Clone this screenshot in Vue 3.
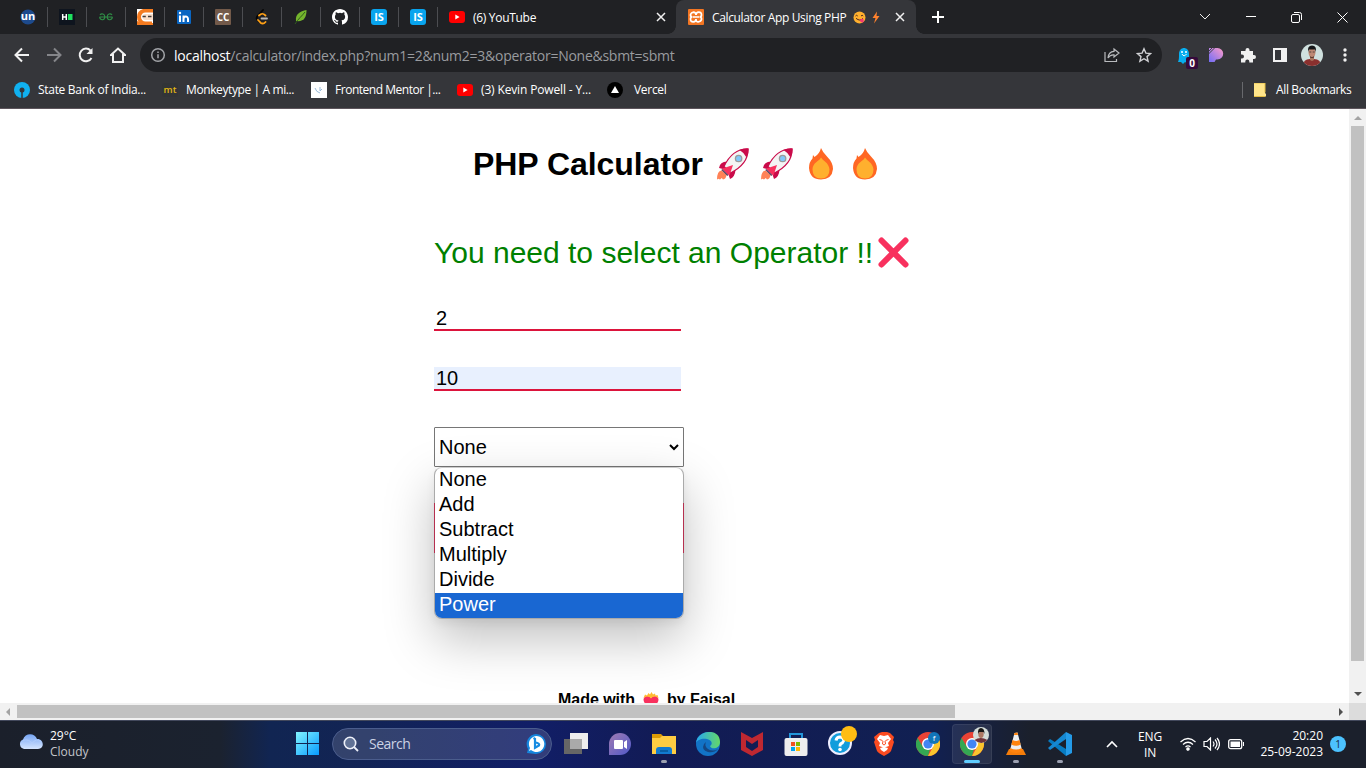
<script setup>
const options = ['None', 'Add', 'Subtract', 'Multiply', 'Divide', 'Power']
</script>

<template>
  <div class="screen">
    <header class="tabs">
      <div class="mini"><svg width="16" height="16" viewBox="0 0 16 16"><circle cx="8" cy="8" r="7.500" fill="#1d4a8c"/><text x="8" y="11" text-anchor="middle" font-size="11" font-weight="700" fill="#fff">un</text></svg></div>
      <div class="mini"><svg width="16" height="16" viewBox="0 0 16 16"><rect width="16" height="16" fill="#0e141e"/><path d="M3.700 5v6M7.300 5v6M3.700 8h3.500" stroke="#fff" stroke-width="1.500"/><rect x="9" y="5" width="4.500" height="6" fill="#1fe25f"/></svg></div>
      <div class="mini"><svg width="16" height="16" viewBox="0 0 16 16" fill="none" stroke="#2f8d46" stroke-width="1.200"><path d="M2 6C3.500 4 6.800 4.800 6.800 8c0 3.200-4.300 4-5.300.2M1.500 8h13M14 6c-1.500-2-4.800-1.200-4.800 2 0 3.200 4.300 4 5.300.2"/></svg></div>
      <div class="mini"><svg width="16" height="16" viewBox="0 0 16 16"><rect width="16" height="16" fill="#fff"/><path d="M16 0v3.500H8.500a4.500 4.500 0 0 0 0 9H15V15H6q-6-1-6-7t6-8z" fill="#f47b20"/><path d="M16 5H8.500a3 3 0 0 0 0 6H16z" fill="#f8ddc9"/><path d="M5.500 7.500h3.300M11 7.500h3.500" stroke="#423b39" stroke-width="1.300"/><path d="M0 12v4h16v-2H6z" fill="#f47b20"/></svg></div>
      <div class="mini"><svg width="14" height="14" viewBox="0 0 14 14"><rect width="14" height="14" rx="1" fill="#0a66c2"/><path d="M3 5.500V12M6.500 5.500V12M6.500 9c0-3.200 4.500-3.400 4.500 0v3" fill="none" stroke="#fff" stroke-width="2"/><circle cx="3" cy="3" r="1.200" fill="#fff"/></svg></div>
      <div class="mini"><svg width="16" height="16" viewBox="0 0 16 16"><rect width="16" height="16" rx="1" fill="#735a4a"/><text x="8" y="11.500" text-anchor="middle" font-size="10" font-weight="700" fill="#fff">CC</text></svg></div>
      <div class="mini"><svg width="16" height="16" viewBox="0 0 16 16" fill="none" stroke-width="1.800" stroke-linecap="round"><path d="M9 1 3 7.500M3.500 7.500C1.500 9.500 3 10.500 5 12.500" stroke="#050505"/><path d="M5 6.500C8 3.500 9.500 4.500 11.500 6.500M4 11l2.500 2.700c2 1.500 3.500 1 5-.7" stroke="#ffa116"/><path d="M7.500 9.500H13" stroke="#b9b9b9"/></svg></div>
      <div class="mini"><svg width="16" height="16" viewBox="0 0 16 16"><path d="M13.500 1C7 2.500 2 5 3 12c8 1 10.500-3.500 10.500-11z" fill="#74b42d"/><path d="M2 15C5 10 9 7 12 3" stroke="#315c1d" fill="none"/></svg></div>
      <div class="mini"><svg width="16" height="16" viewBox="0 0 16 16"><path fill="#fff" d="M8 0C3.580 0 0 3.580 0 8c0 3.540 2.290 6.530 5.470 7.590.4.070.55-.17.55-.38 0-.19-.01-.82-.01-1.490-2.010.37-2.530-.49-2.690-.94-.09-.23-.48-.94-.82-1.130-.28-.15-.68-.52-.01-.53.63-.01 1.080.58 1.230.82.72 1.210 1.870.87 2.330.66.07-.52.28-.87.51-1.070-1.780-.2-3.640-.89-3.640-3.950 0-.87.31-1.590.82-2.150-.08-.2-.36-1.020.08-2.120 0 0 .67-.21 2.200.82a7.600 7.600 0 0 1 4 0c1.530-1.040 2.200-.82 2.200-.82.44 1.100.16 1.920.08 2.120.51.56.82 1.270.82 2.150 0 3.070-1.870 3.750-3.650 3.950.29.25.54.73.54 1.480 0 1.070-.01 1.930-.01 2.200 0 .21.15.46.55.38A8 8 0 0 0 16 8c0-4.420-3.580-8-8-8z"/></svg></div>
      <div v-for="n in 2" :key="n" class="mini"><svg width="16" height="16" viewBox="0 0 16 16"><rect width="16" height="16" rx="3" fill="#08a4ee"/><text x="8" y="12" text-anchor="middle" font-size="11" font-weight="700" fill="#fff">IS</text></svg></div>
      <div class="tab">
        <svg width="16" height="16" viewBox="0 0 16 16"><rect y="2" width="16" height="12" rx="3" fill="#f00"/><path d="m6.300 5.500 4.300 2.500-4.300 2.500z" fill="#fff"/></svg>
        <span class="t-yt">(6) YouTube</span>
        <svg class="end" width="10" height="10" viewBox="0 0 10 10"><path d="m1 1 8 8M9 1 1 9" stroke="#f1f1f1" stroke-width="1.500"/></svg>
      </div>
      <div class="tab active">
        <svg width="16" height="16" viewBox="0 0 16 16"><rect width="16" height="16" rx="1" fill="#f37623"/><path d="M5.200 3.200Q8 3.200 8 6q0-2.800 2.800-2.800T13.500 6q0 2-2 2 2 0 2 2t-2.700 2.800T8 10q0 2.800-2.800 2.800T2.500 10q0-2 2-2-2 0-2-2t2.700-2.800zM5 8h6" fill="none" stroke="#fff" stroke-width="1.700"/></svg>
        <span class="t-calc">Calculator App Using PHP</span>
        <svg class="face" width="13" height="13" viewBox="0 0 13 13"><circle cx="6.500" cy="6.500" r="6" fill="#ffb02e"/><path d="M2.500 5q1.200-1.500 2.200 0M8 5q1.200-1.500 2.200 0M3 7.300q4 3.500 7 0" fill="none" stroke="#4b2820"/><path d="M6.500 8.800 10 7.500q1.700 3.500-.5 4-2 .3-3-2.700z" fill="#f13774"/></svg>
        <svg class="bolt" width="8" height="13" viewBox="0 0 8 13"><path d="M5 .5.5 7h3L2 12.500 7.500 5h-3z" fill="#ff822d"/></svg>
        <svg class="end" width="10" height="10" viewBox="0 0 10 10"><path d="m1 1 8 8M9 1 1 9" stroke="#f1f1f1" stroke-width="1.500"/></svg>
      </div>
      <svg class="plus" width="14" height="14" viewBox="0 0 14 14"><path d="M7 1v12M1 7h12" stroke="#fff" stroke-width="2"/></svg>
      <div class="window">
        <span><svg width="12" height="8" viewBox="0 0 12 8"><path d="m1 1 5 5 5-5" stroke="#eee" fill="none"/></svg></span>
        <span><svg width="10" height="2" viewBox="0 0 10 2"><path d="M0 .5h10" stroke="#fff"/></svg></span>
        <span><svg width="11" height="11" viewBox="0 0 11 11" fill="none" stroke="#fff"><rect x=".5" y="2.500" width="8" height="8" rx="1.500"/><path d="M3 .5h5.500a2 2 0 0 1 2 2V8"/></svg></span>
        <span><svg width="11" height="11" viewBox="0 0 11 11"><path d="m.5.5 10 10M10.500.5l-10 10" stroke="#fff"/></svg></span>
      </div>
    </header>

    <div class="toolbar">
      <div class="nav">
        <svg width="16" height="16" viewBox="0 0 16 16"><path d="M15 8H2M8 1.500 1.500 8 8 14.500" fill="none" stroke="#f1f1f1" stroke-width="2"/></svg>
        <svg width="16" height="16" viewBox="0 0 16 16"><path d="M1 8h13M8 1.500 14.500 8 8 14.500" fill="none" stroke="#85868a" stroke-width="2"/></svg>
        <svg width="16" height="16" viewBox="0 0 16 16"><path d="M13.500 11A6.300 6.300 0 1 1 12.600 3.600" fill="none" stroke="#f1f1f1" stroke-width="2"/><path d="M14.500 1v6h-6z" fill="#f1f1f1"/></svg>
        <svg width="16" height="16" viewBox="0 0 16 16"><path d="M1 8 8 1.500 15 8h-2v7H3V8z" fill="none" stroke="#f1f1f1" stroke-width="2"/></svg>
      </div>
      <div class="omnibox">
        <svg width="16" height="16" viewBox="0 0 16 16"><circle cx="8" cy="8" r="6.300" fill="none" stroke="#a2a4a8" stroke-width="1.500"/><path d="M8 7.200v4M8 4.500v1.500" stroke="#a2a4a8" stroke-width="1.500"/></svg>
        <span class="url"><b>localhost</b>/calculator/index.php?num1=2&amp;num2=3&amp;operator=None&amp;sbmt=sbmt</span>
        <svg class="end" width="16" height="16" viewBox="0 0 16 16"><path d="M1 5v9.500h11.500V12M10 2l5 4-5 4V7.800q-4-.3-6 3.200.5-6.500 6-6.700z" fill="none" stroke="#b9bbbe" stroke-width="1.200"/></svg>
        <svg class="star" width="16" height="16" viewBox="0 0 16 16"><path d="m8 1.800 1.900 4.300 4.700.4-3.600 3.100 1.100 4.600L8 11.700l-4.100 2.500L5 9.600 1.400 6.500l4.700-.4z" fill="none" stroke="#d0d1d4" stroke-width="1.400"/></svg>
      </div>
      <div class="extensions">
        <svg width="22" height="24" viewBox="0 0 22 24"><path d="M2 16c1-2 1-5 1-8 0-8 10-8 10 0v7l-2 2-2-1-2 2-2-2z" fill="#08aeef"/><path d="M6 8q2 3.500 4.500 0" fill="none" stroke="#fff"/><circle cx="6" cy="6" r="1" fill="#fff"/><circle cx="10" cy="6" r="1" fill="#fff"/><rect x="10" y="11" width="12" height="12" rx="2" fill="#350a3c"/><text x="16" y="20.500" text-anchor="middle" font-size="10" font-weight="700" fill="#fff">0</text></svg>
        <svg width="16" height="16" viewBox="0 0 16 16"><defs><linearGradient id="p" x1="1" y1="0" x2="0" y2="1"><stop stop-color="#ff9cc8"/><stop offset="1" stop-color="#706cf7"/></linearGradient></defs><path d="M1 1h8.500a5.700 5.700 0 0 1 0 11.400H8L6.500 15H1z" fill="url(#p)"/><path d="m0 5 5-5M0 7.500 7.500 0" stroke="#35363a" stroke-width=".9"/></svg>
        <svg width="16" height="16" viewBox="0 0 16 16"><path d="M1 4h4.500V3a2 2 0 0 1 4 0v1H13v4h1a2 2 0 0 1 0 4h-1v3.500H9.300v-1a2 2 0 0 0-4 0v1H1v-4h1a2 2 0 0 0 0-4H1z" fill="#f1f1f1"/></svg>
        <svg width="16" height="16" viewBox="0 0 16 16"><path fill-rule="evenodd" d="M1 1h14v14H1zM3 3v10h6V3z" fill="#f1f1f1"/></svg>
        <svg width="22" height="22" viewBox="0 0 22 22"><defs><clipPath id="av"><circle cx="11" cy="11" r="11"/></clipPath></defs><g clip-path="url(#av)"><path d="M0 0h22v22H0z" fill="#cfe0de"/><path d="M2 22q0-7 7-7h4q7 0 7 7z" fill="#8a302e"/><path d="M9 11h4v5l-2 1-2-1z" fill="#aa765f"/><ellipse cx="11" cy="8.500" rx="3.500" ry="4.800" fill="#bd8873"/><path d="M7.200 8Q6 1.500 11 1.500T14.800 8L14 5.500H8z" fill="#161719"/><path d="M8.500 11.500q2.500 3 5 0L12.500 14h-3z" fill="#5c3a30"/><path d="M8.300 8h2M11.700 8h2" stroke="#403532" stroke-width=".8"/></g></svg>
        <svg width="4" height="16" viewBox="0 0 4 16" fill="#f1f1f1"><circle cx="2" cy="3" r="1.700"/><circle cx="2" cy="8" r="1.700"/><circle cx="2" cy="13" r="1.700"/></svg>
      </div>
    </div>

    <nav class="bookmarks">
      <svg width="16" height="16" viewBox="0 0 16 16"><circle cx="8" cy="8" r="8" fill="#10b1f0"/><circle cx="8" cy="8" r="2.500" fill="#35363a"/><path d="M8 8v8" stroke="#35363a" stroke-width="1.500"/></svg><span class="b-sbi">State Bank of India...</span>
      <svg width="16" height="16" viewBox="0 0 16 16"><rect y="1" width="16" height="14" rx="3" fill="#323437"/><text x="8" y="11" text-anchor="middle" font-size="9.500" font-weight="600" fill="#e2b714">mt</text></svg><span class="b-mt">Monkeytype | A mi...</span>
      <svg width="16" height="16" viewBox="0 0 16 16"><path d="M0 0h16v16H0z" fill="#fff"/><path d="M4 6q1 4 5 5M9 5v4l2-2" stroke="#98b9d8" fill="none"/></svg><span class="b-fm">Frontend Mentor |...</span>
      <svg width="16" height="16" viewBox="0 0 16 16"><rect y="2" width="16" height="12" rx="3" fill="#f00"/><path d="m6.300 5.500 4.300 2.500-4.300 2.500z" fill="#fff"/></svg><span class="b-kp">(3) Kevin Powell - Y...</span>
      <svg width="16" height="16" viewBox="0 0 16 16"><circle cx="8" cy="8" r="8" fill="#000"/><path d="m8 4 4 7H4z" fill="#fff"/></svg><span class="b-ver">Vercel</span>
      <div class="all"><svg width="14" height="14" viewBox="0 0 14 14"><path d="M1 0h11v10l1 1v2.500H1z" fill="#ffe58a"/><path d="M1 0h11v9.500M1 13.500h11" fill="none" stroke="#e4bd42"/></svg><span class="b-all">All Bookmarks</span></div>
    </nav>

    <main class="viewport">
      <section class="page">
        <h1>PHP Calculator
          <svg v-for="n in 2" :key="'r' + n" class="rocket" width="32" height="32" viewBox="0 0 32 32"><path d="M0 31.500Q0 23 4.500 22.500L9.500 27q-.5 4-3.500 4.500l-1.200-1.600L3 31.500l-1.500-.7z" fill="#ff8257"/><path d="M10 13.500Q3 13.500 2 20l6 1.500zM18.500 22Q18 29 13 31l-2-6z" fill="#ca0b4a"/><path d="M31 1Q15.500.5 7 18.500l6.500 6.500Q31.500 16 31 1z" fill="#f4f4f4" stroke="#ca0b4a" stroke-width="1.200"/><path d="M31.600.4Q26.500 0 22.500 2q4.500 2.500 7 7.500Q31.800 5.500 31.600.4z" fill="#ca0b4a"/><path d="M5.500 20.500 16 17l-3.500 10.500z" fill="#f8315e"/><path d="m7 20-1.500 1 5.500 6 1.500-2z" fill="#f8315e"/><path d="m4.800 21.500 6 6" stroke="#61415f" stroke-width="1.600"/><circle cx="21.600" cy="10.500" r="3.200" fill="#82c7f8" stroke="#9b9b9b" stroke-width="1.300"/></svg>
          <svg v-for="n in 2" :key="'f' + n" class="fire" width="32" height="32" viewBox="0 0 32 32"><path d="M16 0q1.500 4 6 8.500Q28 14.500 28 21q-1 10.500-12 10.500T4 20q0-6 3.500-9.500L8 7l1.500 2Q14.500 6 16 0z" fill="#ff6723"/><path d="M16 9.500q1 1.500 4.500 4.500T24.500 21.500q0 9-8.500 9t-8.500-9q0-4.500 4-7.500T16 9.500z" fill="#ffb02e"/></svg>
        </h1>
        <p class="message">You need to select an Operator !!<svg width="31" height="31" viewBox="0 0 31 31"><path d="m3.500 3.500 24 24M27.500 3.500l-24 24" stroke="#f8315e" stroke-width="6" stroke-linecap="round"/></svg></p>
        <div class="field">2</div>
        <div class="field filled">10</div>
        <div class="select">None<svg width="10" height="7" viewBox="0 0 10 7"><path d="m1 1 4 4 4-4" fill="none" stroke="#000" stroke-width="2"/></svg>
          <ul class="menu"><li v-for="o in options" :key="o" :class="{ chosen: o === 'Power' }">{{ o }}</li></ul>
        </div>
        <div class="submit"></div>
        <footer>Made with <svg width="16" height="16" viewBox="0 0 16 16"><path d="M8 16Q.5 12 .5 7.500 1 4 4.500 4 7 4 8 6q1-2 3.500-2 3.500 0 4 3.500Q15.500 12 8 16z" fill="#f8315e"/><path d="M.5 6 2 2.500l2 1L5.500 1 7 2.500 8.500 0l1.500 2.500 2-1 .5 2 2-.5 1 3-3-1.500-3 .5L8 6.500 6.500 5l-3-.5z" fill="#ffba31"/></svg> by Faisal</footer>
      </section>
      <aside class="vbar"><svg width="17" height="17" viewBox="0 0 17 17"><path d="m5 11 4-4 4 4z" fill="#a3a3a3"/></svg><i></i><svg width="17" height="17" viewBox="0 0 17 17"><path d="m5 6 4 4 4-4z" fill="#505050"/></svg></aside>
    </main>
    <div class="hbar"><svg width="17" height="17" viewBox="0 0 17 17"><path d="M10 5v8L6 9z" fill="#a3a3a3"/></svg><i></i><svg class="end" width="17" height="17" viewBox="0 0 17 17"><path d="M7 5v8l4-4z" fill="#505050"/></svg><b></b></div>

    <div class="taskbar">
      <div class="weather"><svg width="26" height="18" viewBox="0 0 26 18"><defs><linearGradient id="c" x2="0" y2="1"><stop stop-color="#76a5f4"/><stop offset="1" stop-color="#d5e5ff"/></linearGradient></defs><path d="M6 16a5 5 0 0 1-1-9.500C7-.5 17-.5 19 6c7-.5 8 10 1 10z" fill="url(#c)"/><path d="M5 7.500q6-2 9 3 4-6 9-2" fill="none" stroke="#b9d2ff" stroke-opacity=".6"/></svg><p><span>29°C</span><br><span class="cloudy">Cloudy</span></p></div>
      <svg class="start" width="23" height="23" viewBox="0 0 23 23"><defs><linearGradient id="w" x2="1" y2="1"><stop stop-color="#82f4ff"/><stop offset="1" stop-color="#079bff"/></linearGradient></defs><path d="M0 0h11v11H0zM12 0h11v11H12zM0 12h11v11H0zM12 12h11v11H12z" fill="url(#w)"/></svg>
      <div class="search"><svg width="16" height="16" viewBox="0 0 16 16"><circle cx="7" cy="7" r="5.700" fill="#617296" stroke="#eef1fa" stroke-width="1.600"/><path d="m11 11 4 4" stroke="#eef1fa" stroke-width="1.800"/></svg><span>Search</span><svg class="end" width="20" height="20" viewBox="0 0 20 20"><path d="M10 0a10 10 0 0 1 0 20l-9-1 1-4A10 10 0 0 1 10 0z" fill="#1585dd"/><path d="M10 2a8 8 0 1 1-5 14l-2 1 1-3A8 8 0 0 1 10 2z" fill="#fff"/><path d="m7.500 4 1.500.8v9l4-2.300q1-2-3-3" fill="none" stroke="#178be2" stroke-width="2.200"/></svg></div>
      <div class="apps">
        <div><svg width="24" height="24" viewBox="0 0 24 24"><path d="M6 1h18v16H6z" fill="#eee"/><path d="M0 7h18v15H0z" fill="#666"/><path d="M6 7h12v10H6z" fill="#aaa"/></svg></div>
        <div><svg width="24" height="24" viewBox="0 0 24 24"><defs><linearGradient id="tm" x2="1" y2="1"><stop stop-color="#a07bb2"/><stop offset="1" stop-color="#5059c9"/></linearGradient></defs><path d="M12 1a11 11 0 0 1 0 22H1V12A11 11 0 0 1 12 1z" fill="url(#tm)"/><rect x="6" y="8" width="9" height="9" rx="1" fill="#fff"/><path d="m16 10 3-2v9l-3-2z" fill="#fff"/></svg></div>
        <div class="open"><svg width="24" height="24" viewBox="0 0 24 24"><path d="M0 2h9l2 2h13v18H0z" fill="#dc9b06"/><path d="M0 6h8l2-2h14v18H0z" fill="#ffcd42"/><path d="M4 22v-4q0-3 3-3h10q3 0 3 3v4z" fill="#127bd0"/><path d="M8 19h8" stroke="#075697" stroke-width="1.500"/></svg></div>
        <div><svg width="24" height="24" viewBox="0 0 24 24"><defs><linearGradient id="eg"><stop stop-color="#27a8f0"/><stop offset="1" stop-color="#64d867"/></linearGradient></defs><circle cx="12" cy="12" r="12" fill="#1273c6"/><path d="M0 11C1-2 24-5 24 10c0 7-9 8-10 4 3-2 2-6-3-7S1 8 0 11z" fill="url(#eg)"/><path d="M8 12q-3 6 4 8 6 1 10-3-5 3-10 0-4-3-2-7z" fill="#154783"/></svg></div>
        <div><svg width="22" height="24" viewBox="0 0 22 24"><path d="m0 0 11 6L22 0v18l-11 6L0 18zM5 8v7l6 4 6-4V8l-6 4z" fill="#bf2831" fill-rule="evenodd"/></svg></div>
        <div><svg width="24" height="24" viewBox="0 0 24 24"><path d="M6 8V2h12v6" fill="none" stroke="#2496da" stroke-width="2"/><rect x="0.500" y="6" width="23" height="18" rx="2" fill="#eee"/><path d="M7 10h4v4H7z" fill="#f25022"/><path d="M12 10h4v4h-4z" fill="#7fba00"/><path d="M7 15h4v4H7z" fill="#00a4ef"/><path d="M12 15h4v4h-4z" fill="#ffb900"/></svg></div>
        <div><svg class="help" width="30" height="30" viewBox="0 0 30 30"><circle cx="13" cy="17" r="11" fill="#129ddc" stroke="#eef" stroke-width="2"/><path d="M9 14.500q.5-3.500 4-3.500 4 .5 3.500 4-.5 2-3 3-.5.500-.5 2.500" fill="none" stroke="#fff" stroke-width="3"/><circle cx="13" cy="23.500" r="1.800" fill="#fff"/><circle cx="22" cy="8" r="8" fill="#ffbd13"/></svg></div>
        <div><svg width="20" height="24" viewBox="0 0 20 24"><path d="m5 1 3-1h5l3 1 4 4-1 3 1 2-3 9q-1 2-7 5-6-3-7-5L0 10l1-2-1-3z" fill="#fb4b21"/><path d="m10 4 4-1 3 4-3 4 1 3-3 1-2 1-2-1-3-1 1-3-3-4 3-4zM6 16l4-1 4 1-1 2-3 2-3-2z" fill="#fff"/><path d="m5.500 7.500 3 1M14.500 7.500l-3 1M9 9l-.5 3 1.500 1 1.500-1L11 9" stroke="#fb4b21" fill="none"/></svg></div>
        <div><svg width="24" height="24" viewBox="0 0 24 24"><circle cx="12" cy="12" r="12" fill="#ea4335"/><path d="M1.600 6 7 15l8-1-3 10A12 12 0 0 1 1.600 6z" fill="#34a853"/><path d="M12 6h10.400A12 12 0 0 1 12 24l5-9z" fill="#fbc52d"/><circle cx="12" cy="12" r="6" fill="#fff"/><circle cx="12" cy="12" r="4.600" fill="#4285f4"/><circle cx="18" cy="6" r="6" fill="#1275b9"/><text x="18" y="9" text-anchor="middle" font-size="8" fill="#fff">f</text></svg></div>
        <div class="current"><svg class="person" width="30" height="30" viewBox="0 0 30 30"><circle cx="12" cy="18" r="12" fill="#ea4335"/><path d="M1.600 12 7 21l8-1-3 10A12 12 0 0 1 1.600 12z" fill="#34a853"/><path d="M12 12h10.400A12 12 0 0 1 12 30l5-9z" fill="#fbc52d"/><circle cx="12" cy="18" r="6" fill="#fff"/><circle cx="12" cy="18" r="4.600" fill="#4285f4"/><circle cx="21" cy="9" r="8" fill="#d4ddd9"/><path d="M14.500 14q6-4 13 0-6 6-13 0z" fill="#70333a"/><ellipse cx="21" cy="8" rx="2.700" ry="4" fill="#ad7964"/><path d="M18 8q-.5-6 3-6t3.500 6l-1-2h-4.500z" fill="#171717"/></svg></div>
        <div class="open"><svg width="20" height="24" viewBox="0 0 20 24"><path d="M3 17h14l3 6H0z" fill="#f57d0a"/><path d="m8.500 1 3-.5L16 18q-6 4-12 0z" fill="#eee"/><path d="m6.500 8-1.200 4.500q4.700 2.500 9.400 0L13.500 8q-3.500 2-7 0zM8.500 1 8 3h4L11.500.5zM4.300 16l-.8 3q6.500 4 13 0l-.8-3q-5.700 3-11.400 0z" fill="#ff830d"/></svg></div>
        <div class="open"><svg width="24" height="24" viewBox="0 0 24 24"><path d="m18 0 6 3v18l-6 3z" fill="#249be8"/><path d="m2 7-2 2 18 15v-7z" fill="#077bc1"/><path d="M18 0v7L2 18l-2-2z" fill="#1688d1"/></svg></div>
      </div>
      <div class="tray">
        <svg width="12" height="8" viewBox="0 0 12 8"><path d="m1 7 5-5 5 5" fill="none" stroke="#fff" stroke-width="1.600"/></svg>
        <p class="lang">ENG<br>IN</p>
        <svg class="wifi" width="16" height="14" viewBox="0 0 16 14" fill="none" stroke="#fff" stroke-width="1.200"><path d="M.5 5Q8-2 15.500 5M3 7.500q5-4.500 10 0M5.500 10q2.500-2.200 5 0"/><circle cx="8" cy="12" r="1.200" fill="#fff"/></svg>
        <svg class="sound" width="17" height="14" viewBox="0 0 17 14" fill="none" stroke="#fff" stroke-width="1.200"><path d="M1 4.500h3L7.500 1v12L4 9.500H1zM10 4.500q2 2.500 0 5M12 2.500q4 4.500 0 9M14 1q5 6 0 12"/></svg>
        <svg class="battery" width="17" height="12" viewBox="0 0 17 12"><rect x=".7" y="1.700" width="13" height="9" rx="2" fill="none" stroke="#fff" stroke-width="1.300"/><path d="M2.500 3.500h9.500v5.500H2.500zM15 4h1v4h-1z" fill="#fff"/></svg>
        <p class="clock">20:20<br>25-09-2023</p>
        <span class="badge">1</span>
      </div>
    </div>
  </div>
</template>

<style>
body { overflow: hidden; }
</style>
<style scoped>
* { box-sizing: border-box; }
svg { flex: none; display: block; }
p { margin: 0; }
.screen { width: 1366px; height: 768px; overflow: hidden; background: #fff; font: 12px "Open Sans", "Noto Sans", sans-serif; color: #fff; display: flex; flex-direction: column; white-space: nowrap; }
.end { margin-left: auto; }
.tabs { height: 34px; flex: none; background: #202124; display: flex; align-items: center; padding-left: 9px; }
.mini { width: 39px; height: 20px; display: flex; align-items: center; justify-content: center; border-right: 1px solid #4c4d51; }
.tab { width: 238px; height: 34px; display: flex; align-items: center; padding: 0 10px 0 11px; gap: 8px; }
.active { width: 240px; background: #35363a; border-radius: 8px 8px 0 0; padding: 0 11px 0 12px; position: relative; }
.active::before, .active::after { content: ""; position: absolute; bottom: 0; width: 8px; height: 8px; }
.active::before { left: -8px; background: radial-gradient(circle at 0 0, #202124 7.500px, #35363a 8px); }
.active::after { right: -8px; background: radial-gradient(circle at 100% 0, #202124 7.500px, #35363a 8px); }
.face { margin-left: -1px; }
.bolt { margin-left: -2px; }
.plus { margin-left: 15px; }
.window { margin-left: auto; display: flex; height: 28px; }
.window span { width: 46px; display: flex; align-items: center; justify-content: center; }
.window span:nth-child(3), .window span:last-child { padding-right: 1px; }
.toolbar { height: 38px; flex: none; background: #35363a; display: flex; padding-top: 4px; }
.nav { width: 140px; display: flex; align-items: center; padding-left: 14px; gap: 16px; }
.omnibox { width: 1022px; height: 34px; background: #202124; border-radius: 17px; display: flex; align-items: center; padding: 0 10px; gap: 8px; font-size: 14px; color: #999b9f; }
.url b { color: #fff; font-weight: 400; }
.star { margin-left: 8px; }
.extensions { display: flex; align-items: center; padding-left: 14px; }
.extensions svg:nth-child(1) { margin-top: 5px; }
.extensions svg:nth-child(2) { margin-left: 10px; }
.extensions svg:nth-child(3) { margin-left: 16px; }
.extensions svg:nth-child(4) { margin-left: 16px; }
.extensions svg:nth-child(5) { margin-left: 13px; }
.extensions svg:nth-child(6) { margin-left: 20px; }
.bookmarks { height: 37px; flex: none; background: #35363a; border-bottom: 1px solid #5d555c; display: flex; align-items: center; padding-left: 14px; }
.bookmarks span { display: block; margin-top: -1px; }
.bookmarks .b-sbi { margin-left: 8px; width: 124px; letter-spacing: -.3px; }
.bookmarks .b-mt { margin-left: 8px; width: 125px; letter-spacing: -.39px; }
.bookmarks .b-fm { margin-left: 8px; width: 122px; letter-spacing: -.48px; }
.bookmarks .b-kp { margin-left: 8px; width: 126px; letter-spacing: -.15px; }
.bookmarks .b-ver { margin-left: 11px; letter-spacing: -.3px; }
.b-all { letter-spacing: -.35px; }
.all { height: 16px; margin-left: auto; width: 124px; display: flex; align-items: center; border-left: 1px solid #68696d; padding-left: 10px; gap: 9px; }
.t-yt { letter-spacing: -.3px; }
.t-calc { letter-spacing: -.35px; }
.url { letter-spacing: -.26px; }
.viewport { height: 594px; flex: none; display: flex; color: #000; font-family: "Liberation Sans", Arial, sans-serif; }
.page { width: 1349px; overflow: hidden; padding: 37px 0 0 434px; }
h1 { display: flex; align-items: center; margin: 0 0 0 39px; font-size: 32px; line-height: 37px; height: 37px; letter-spacing: -.05px; }
.rocket, .fire { position: relative; left: 2px; margin: -1px 0 0 12px; }
.message { display: flex; align-items: center; font-size: 30px; line-height: 34px; color: #008000; margin-top: 53px; }
.message svg { margin: -2px 0 0 5px; }
.field { width: 247px; height: 24px; margin-top: 36px; border-bottom: 2px solid #dc143c; padding-left: 2px; font-size: 20px; line-height: 22px; }
.message + .field { margin-top: 37px; }
.filled { background: #e8f0fe; }
.select { position: relative; width: 250px; height: 40px; margin-top: 36px; border: 1px solid #767676; border-radius: 1px; padding: 0 4px; font-size: 20px; display: flex; align-items: center; justify-content: space-between; }
.menu { position: absolute; left: -1px; top: 39px; width: 250px; height: 152px; margin: 0; padding: 0; list-style: none; background: #fff; border: 1px solid #aaa; border-top-color: #ccc; border-radius: 8px; overflow: hidden; box-shadow: 0 20px 50px rgba(0, 0, 0, .25), 0 4px 10px rgba(0, 0, 0, .06); }
.menu li { height: 25px; line-height: 23px; padding-left: 4px; }
.menu .chosen { background: #1967d2; color: #fff; }
.submit { position: relative; z-index: 1; width: 250px; height: 50px; margin-top: 36px; border: solid #b5304f; border-width: 0 1px; }
footer { margin: 138px 0 0 124px; font-size: 16px; line-height: 18px; font-weight: 700; display: flex; white-space: pre; letter-spacing: -.03px; }
footer svg { margin: 1px 3px 0 4px; }
.vbar { width: 17px; background: #f1f1f1; }
.vbar i { display: block; width: 13px; height: 535px; margin: 0 0 25px 2px; background: #c1c1c1; }
.hbar { height: 17px; flex: none; background: #f1f1f1; display: flex; align-items: center; }
.hbar i { width: 938px; height: 13px; background: #c1c1c1; }
.hbar b { width: 17px; height: 17px; background: #dcdcdc; }
.taskbar { height: 48px; flex: none; border-top: 1px solid #42485c; background: linear-gradient(90deg, #1b202b 0, #1b222f 220px, #112552 270px, #122454 350px, #111e67 530px, #121b55 660px, #112052 930px, #1b202c 1030px, #1b202c 100%); display: flex; align-items: center; padding-bottom: 2px; }
.weather { width: 296px; display: flex; align-items: center; padding-left: 18px; gap: 6px; line-height: 16px; }
.weather svg { margin-top: -4px; }
.cloudy { color: #c3c5ca; }
.search { width: 220px; height: 32px; margin-left: 13px; border: 1px solid #4b5d8d; border-radius: 16px; background: #ffffff24; display: flex; align-items: center; padding: 0 5px 0 11px; gap: 9px; font-size: 14px; letter-spacing: -.5px; color: #cbd2e5; }
.search svg:first-child { margin-left: -1px; }
.search span { margin-left: 1px; }
.apps { display: flex; margin-left: 2px; align-items: center; }
.apps div { width: 44px; height: 40px; display: flex; align-items: center; justify-content: center; position: relative; }
.apps .current { width: 40px; margin: 0 2px; background: #ffffff14; border: 1px solid #ffffff12; border-radius: 4px; }
.apps .help { margin: -6px 0 0 4px; }
.apps .person { margin: -6px 0 0 6px; }
.open::after, .current::after { content: ""; position: absolute; bottom: 1px; width: 6px; height: 3px; border-radius: 2px; background: #9ba0b0; }
.current::after { width: 16px; bottom: 0; background: #60cdff; }
.tray { display: flex; flex: 1; align-items: center; padding-left: 24px; line-height: 16px; }
.lang { width: 64px; margin-top: 2px; text-align: center; letter-spacing: -.2px; }
.wifi { margin-left: -2px; }
.sound { margin-left: 7px; }
.battery { margin-left: 8px; }
.clock { margin-left: auto; text-align: right; }
.badge { width: 16px; height: 16px; margin: 0 20px 0 7px; border-radius: 50%; background: #4cc2ff; color: #162b42; font-size: 10px; text-align: center; }
</style>
